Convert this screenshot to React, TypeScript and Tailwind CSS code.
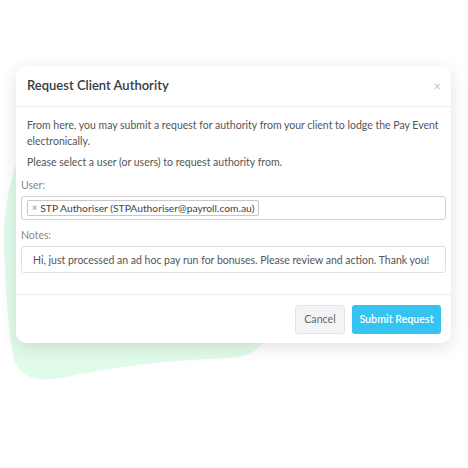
export default function App() {
  return (
    <div className="relative h-[468px] w-[468px] overflow-hidden bg-white" style={{ fontFamily: 'Lato, "Open Sans", sans-serif' }}>
      <svg className="absolute left-0 top-0" width="468" height="468" viewBox="0 0 468 468" aria-hidden="true">
        <path
          d="M36 108 C 18 150, 2 200, 4 250 C 6 300, 10 340, 14 360 C 20 378, 38 382, 60 378 C 120 366, 170 360, 230 358 C 250 357, 262 348, 268 335 L 268 108 Z"
          fill="#e1fbeb"
        />
      </svg>

      <div className="relative ml-[16px] mt-[66px] w-[435px] rounded-[10px] bg-white shadow-[0_4px_18px_rgba(0,0,0,0.12)]">
        <div className="flex h-[41px] items-center justify-between border-b border-[#ececec] pl-[11px] pr-[10px]">
          <h2 className="text-[13px] font-semibold text-[#363a40]">Request Client Authority</h2>
          <span className="text-[13px] leading-none text-[#c4c4c4]">×</span>
        </div>

        <div className="px-[5px] pb-[21px] pt-[10px] text-[10.5px] leading-[16px] text-[#555]">
          <p className="px-[6px]">
            From here, you may submit a request for authority from your client to lodge the Pay Event electronically.
          </p>
          <p className="mt-[5px] px-[6px]">Please select a user (or users) to request authority from.</p>

          <label className="mt-[7px] block text-[#888]">User:</label>
          <div className="mt-[3px] flex h-[24px] items-center rounded-[3px] border border-[#d4d4d4] px-[5px]">
            <span className="flex h-[16px] items-center rounded-[2px] border border-[#c8c8c8] px-[4px] text-[10.3px] text-[#444]">
              <span className="mr-[3px] text-[9px] text-[#888]">×</span>
              STP Authoriser (STPAuthoriser@payroll.com.au)
            </span>
          </div>

          <label className="mt-[7px] block text-[#888]">Notes:</label>
          <div className="mt-[3px] flex h-[27px] items-center rounded-[3px] border border-[#e0e0e0] px-[11px] text-[#555]">
            Hi, just processed an ad hoc pay run for bonuses. Please review and action. Thank you!
          </div>
        </div>

        <div className="flex h-[49px] items-center justify-end gap-[7px] border-t border-[#ececec] pr-[10px]">
          <button className="h-[29px] w-[50px] rounded-[3px] border border-[#e3e3e3] bg-[#f3f4f6] text-[10.7px] text-[#666]">
            Cancel
          </button>
          <button className="h-[29px] w-[89px] rounded-[3px] bg-[#35c3f1] text-[10.7px] font-semibold text-white">
            Submit Request
          </button>
        </div>
      </div>
    </div>
  )
}
